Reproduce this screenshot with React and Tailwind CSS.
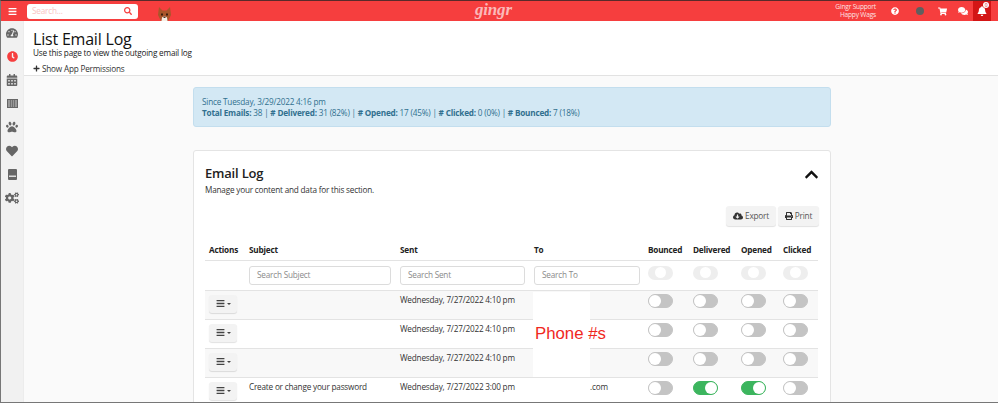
import React from "react";
import { FaBars, FaSearch, FaTachometerAlt, FaClock, FaCalendarAlt, FaPaw, FaHeart, FaCogs, FaQuestionCircle, FaShoppingCart, FaComments, FaBell, FaCloudDownloadAlt, FaPrint, FaPlus, FaChevronUp } from "react-icons/fa";

function Toggle({ on, faint }) {
  if (faint) return (
    <div className="w-[25px] h-[14px] rounded-full bg-[#eeeeee] flex items-center justify-start pl-[7px]">
      <div className="w-[11px] h-[11px] rounded-full bg-white" />
    </div>
  );
  return (
    <div className={`w-[25px] h-[14px] rounded-full border flex items-center ${on ? "bg-[#3cb55e] border-[#3cb55e] justify-end" : "bg-[#c4c4c4] border-[#c4c4c4] justify-start"}`}>
      <div className="w-[12px] h-[12px] rounded-full bg-white" />
    </div>
  );
}

function Row({ subject, sent, to, d, o, odd }) {
  return (
    <tr className={`h-[29px] border-t border-[#e3e3e3] ${odd ? "bg-[#f8f8f8]" : "bg-white"}`}>
      <td className="pl-[4px] align-top pt-[4px]">
        <div className="w-[28px] h-[18px] bg-[#f3f3f3] rounded-[3px] shadow-[0_1px_1px_rgba(0,0,0,0.12)] flex items-center justify-center gap-[2px] text-[#444]">
          <FaBars className="text-[9px]" />
          <span className="w-0 h-0 border-x-[2px] border-x-transparent border-t-[2px] border-t-[#444]" />
        </div>
      </td>
      <td className="align-top pt-[3px] text-[8.2px] leading-[12px] text-[#333]">{subject}</td>
      <td className="align-top pt-[3px] text-[8.2px] leading-[12px] text-[#333]">{sent}</td>
      <td className="align-top pt-[3px] text-[8.2px] leading-[12px] text-[#333] pl-[56px]">{to}</td>
      <td className="align-top pt-[3px]"><Toggle /></td>
      <td className="align-top pt-[3px]"><Toggle on={d} /></td>
      <td className="align-top pt-[3px]"><Toggle on={o} /></td>
      <td className="align-top pt-[3px]"><Toggle /></td>
    </tr>
  );
}

function Search({ ph, w }) {
  return (
    <div className={`${w} h-[19px] border border-[#dcdcdc] rounded-[3px] bg-white flex items-center pl-[7px] pt-[1px] text-[8.2px] text-[#8a8a8a]`}>{ph}</div>
  );
}

function Side({ children, cls = "text-[#666]" }) {
  return <div className={`h-[23.5px] flex items-center justify-center text-[12px] ${cls}`}>{children}</div>;
}

export default function App() {
  return (
    <div className="w-[998px] h-[403px] overflow-hidden flex flex-col border-l border-b border-[#777] border-t border-t-[#5a2a2a] bg-[#fafafa] tracking-[-0.2px]" style={{ fontFamily: '"Open Sans", sans-serif' }}>
      <header className="h-[20px] shrink-0 bg-[#f63e3e] flex items-center text-white">
        <div className="w-[22px] flex justify-center text-[9px]"><FaBars /></div>
        <div className="ml-[4px] w-[111px] h-[15px] bg-white rounded-[3px] flex items-center justify-between pl-[5px] pr-[6px]">
          <span className="text-[8.2px] text-[#f9c4c4]">Search...</span>
          <FaSearch className="text-[#f63e3e] text-[8px]" />
        </div>
        <div className="ml-[20px] self-end shrink-0">
          <svg width="13" height="14" viewBox="0 0 13 14" className="block">
            <path d="M1 0 L4.5 3.5 H8.5 L12 0 L13 8 L10 14 H3 L0 8 Z" fill="#a9562a" />
            <path d="M3.5 14 L4 10.5 L6.5 9 L9 10.5 L9.5 14 Z" fill="#f6efe6" />
            <rect x="3" y="6.5" width="2" height="2" fill="#3a1e0c" />
            <rect x="8" y="6.5" width="2" height="2" fill="#3a1e0c" />
            <rect x="5.5" y="9.5" width="2" height="1.4" fill="#3a1e0c" />
          </svg>
        </div>
        <div className="ml-[304px] text-[17px] font-bold italic leading-none text-[#fbb9b9] w-[40px] -mt-[3px]" style={{ fontFamily: '"Liberation Serif", serif' }}>gingr</div>
        <div className="ml-auto text-right text-[6.6px] leading-[8px] text-[#fde3e3]">
          <div>Gingr Support</div>
          <div>Happy Wags</div>
        </div>
        <FaQuestionCircle className="ml-[15px] text-[8px]" />
        <div className="ml-[17px] w-[8px] h-[8px] rounded-full bg-[#5f5f5f]" />
        <FaShoppingCart className="ml-[14px] text-[9px]" />
        <FaComments className="ml-[11px] text-[10px]" />
        <div className="ml-[5px] mr-[7px] w-[18px] h-[20px] bg-[#d31515] flex items-center justify-center relative">
          <FaBell className="text-[10px]" />
          <span className="absolute top-[1px] right-[2px] w-[6px] h-[6px] rounded-full bg-white text-[#d31515] text-[5px] leading-[6px] text-center">0</span>
        </div>
      </header>
      <div className="flex flex-1 min-h-0">
        <aside className="w-[23px] shrink-0 bg-[#f1f1f1] border-r border-[#ececec] flex flex-col pt-[0.5px]">
          <Side><FaTachometerAlt /></Side>
          <Side cls="text-[#f63e3e]"><FaClock className="text-[11px]" /></Side>
          <Side><FaCalendarAlt /></Side>
          <Side>
            <svg width="11" height="9" viewBox="0 0 11 9"><rect x="0.5" y="0.5" width="10" height="8" fill="#999" stroke="#666" /><path d="M3.5 1V8M5.5 1V8M7.5 1V8" stroke="#666" strokeWidth="0.8" /></svg>
          </Side>
          <Side><FaPaw /></Side>
          <Side><FaHeart /></Side>
          <Side>
            <svg width="9" height="11" viewBox="0 0 9 11"><rect width="9" height="11" rx="1" fill="#666" /><rect x="1" y="6.5" width="7" height="1.5" fill="#ddd" /></svg>
          </Side>
          <Side><FaCogs className="text-[14px]" /></Side>
        </aside>
        <main className="flex-1 min-w-0 flex flex-col">
          <div className="h-[55px] shrink-0 bg-white border-b border-[#e2e2e2] pl-[9px]">
            <h1 className="text-[16px] leading-[18px] mt-[9px] text-[#111]">List Email Log</h1>
            <p className="text-[8.2px] leading-[9px] text-[#222]">Use this page to view the outgoing email log</p>
            <div className="mt-[6px] flex items-center gap-[2px] text-[8.2px] leading-[11px] text-[#333]"><FaPlus className="text-[7px]" />Show App Permissions</div>
          </div>
          <div className="pl-[169px] pr-[167px] pt-[11px] flex flex-col">
            <div className="h-[40px] bg-[#d3e8f4] border border-[#c3deee] rounded-[3px] px-[8px] pt-[8px] text-[8.2px] leading-[11px] text-[#31708f]">
              <div>Since Tuesday, 3/29/2022 4:16 pm</div>
              <div><b>Total Emails:</b> 38 | <b># Delivered:</b> 31 (82%) | <b># Opened:</b> 17 (45%) | <b># Clicked:</b> 0 (0%) | <b># Bounced:</b> 7 (18%)</div>
            </div>
            <section className="mt-[23px] bg-white border border-[#e4e4e4] rounded-[3px] px-[11px] pt-[14px] h-[300px]">
              <div className="flex items-start justify-between">
                <h2 className="text-[13px] leading-[17px] font-semibold text-[#222]">Email Log</h2>
                <FaChevronUp className="text-[15px] text-[#111] mt-[2px]" />
              </div>
              <p className="text-[8.2px] leading-[11px] mt-[2px] text-[#333]">Manage your content and data for this section.</p>
              <div className="flex justify-end gap-[2px] mt-[11px]">
                <div className="h-[20px] w-[50px] bg-[#f3f3f3] rounded-[3px] shadow-[0_1px_1px_rgba(0,0,0,0.12)] flex items-center justify-center gap-[2px] text-[8.2px] text-[#555]"><FaCloudDownloadAlt className="text-[10px] text-[#333]" />Export</div>
                <div className="h-[20px] w-[41px] bg-[#f3f3f3] rounded-[3px] shadow-[0_1px_1px_rgba(0,0,0,0.12)] flex items-center justify-center gap-[2px] text-[8.2px] text-[#555]"><FaPrint className="text-[8px] text-[#333]" />Print</div>
              </div>
              <div className="relative mt-[16px]">
                <table className="w-[613px] table-fixed border-collapse">
                  <colgroup>
                    <col className="w-[44px]" /><col className="w-[151px]" /><col className="w-[134px]" /><col className="w-[114px]" /><col className="w-[45px]" /><col className="w-[48px]" /><col className="w-[42px]" /><col className="w-[35px]" />
                  </colgroup>
                  <thead>
                    <tr className="h-[18px] text-[8.2px] font-bold text-left text-[#222]">
                      <th className="pl-[4px] pb-[1px]">Actions</th><th className="pb-[1px]">Subject</th><th className="pb-[1px]">Sent</th><th className="pb-[1px]">To</th><th className="pb-[1px]">Bounced</th><th className="pb-[1px]">Delivered</th><th className="pb-[1px]">Opened</th><th className="pb-[1px]">Clicked</th>
                    </tr>
                  </thead>
                  <tbody>
                    <tr className="h-[30px] border-t border-[#e3e3e3] bg-white">
                      <td />
                      <td className="align-top pt-[5px]"><Search ph="Search Subject" w="w-[142px]" /></td>
                      <td className="align-top pt-[5px]"><Search ph="Search Sent" w="w-[125px]" /></td>
                      <td className="align-top pt-[5px]"><Search ph="Search To" w="w-[106px]" /></td>
                      <td className="align-top pt-[5px]"><Toggle faint /></td>
                      <td className="align-top pt-[5px]"><Toggle faint /></td>
                      <td className="align-top pt-[5px]"><Toggle faint /></td>
                      <td className="align-top pt-[5px]"><Toggle faint /></td>
                    </tr>
                    <Row odd sent="Wednesday, 7/27/2022 4:10 pm" />
                    <Row sent="Wednesday, 7/27/2022 4:10 pm" />
                    <Row odd sent="Wednesday, 7/27/2022 4:10 pm" />
                    <Row subject="Create or change your password" sent="Wednesday, 7/27/2022 3:00 pm" to=".com" d o />
                  </tbody>
                </table>
                <div className="absolute left-[328px] top-[50px] w-[57px] h-[85px] bg-white">
                  <span className="absolute top-[31px] left-[2px] text-[16.8px] leading-[21px] text-[#f0281e] whitespace-nowrap tracking-normal" style={{ fontFamily: '"Liberation Sans", sans-serif' }}>Phone #s</span>
                </div>
              </div>
            </section>
          </div>
        </main>
      </div>
    </div>
  );
}
